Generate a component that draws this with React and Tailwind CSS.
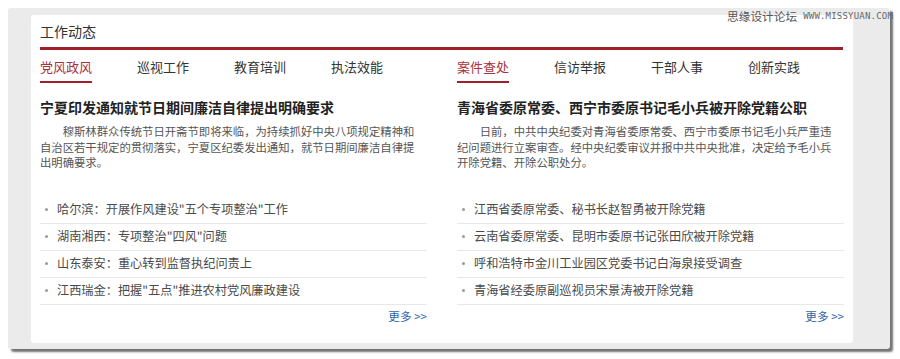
import React from 'react';

const font = { fontFamily: '"Noto Sans CJK SC", "Noto Sans", sans-serif' };

const columns = [
  {
    tabs: ['党风政风', '巡视工作', '教育培训', '执法效能'],
    title: '宁夏印发通知就节日期间廉洁自律提出明确要求',
    summary:
      '穆斯林群众传统节日开斋节即将来临，为持续抓好中央八项规定精神和自治区若干规定的贯彻落实，宁夏区纪委发出通知，就节日期间廉洁自律提出明确要求。',
    items: [
      '哈尔滨：开展作风建设"五个专项整治"工作',
      '湖南湘西：专项整治"四风"问题',
      '山东泰安：重心转到监督执纪问责上',
      '江西瑞金：把握"五点"推进农村党风廉政建设',
    ],
  },
  {
    tabs: ['案件查处', '信访举报', '干部人事', '创新实践'],
    title: '青海省委原常委、西宁市委原书记毛小兵被开除党籍公职',
    summary:
      '日前，中共中央纪委对青海省委原常委、西宁市委原书记毛小兵严重违纪问题进行立案审查。经中央纪委审议并报中共中央批准，决定给予毛小兵开除党籍、开除公职处分。',
    items: [
      '江西省委原常委、秘书长赵智勇被开除党籍',
      '云南省委原常委、昆明市委原书记张田欣被开除党籍',
      '呼和浩特市金川工业园区党委书记白海泉接受调查',
      '青海省经委原副巡视员宋景涛被开除党籍',
    ],
  },
];

const NewsColumn = ({ col }) => {
  return (
    <div className="w-[387px]">
      <div className="flex pt-[3px]">
        {col.tabs.map((tab, i) => (
          <div key={tab} className="w-[97px] shrink-0">
            <div
              className={`inline-block text-[13px] leading-[20px] ${i === 0 ? 'text-[#a8323e]' : 'text-[#333]'}`}
            >
              {tab}
              <div className={`mt-[4px] h-[2px] ${i === 0 ? 'bg-[#a11f2a]' : 'bg-transparent'}`} />
            </div>
          </div>
        ))}
      </div>

      <h3 className="mt-[14px] text-[14px] leading-[20px] font-bold text-[#222]">{col.title}</h3>
      <p className="mt-[7px] w-[380px] text-[11.35px] leading-[15.5px] text-[#555] indent-[2em]">{col.summary}</p>

      <ul className="mt-[26px]">
        {col.items.map(item => (
          <li
            key={item}
            className="flex items-center h-[27px] border-b border-[#e8e8e8] text-[12.2px] text-[#4a4a4a]"
          >
            <span className="w-[3px] h-[3px] rounded-full bg-[#999] ml-[5px] mr-[9px] shrink-0" />
            {item}
          </li>
        ))}
      </ul>

      <div className="flex justify-end mt-[3px]">
        <a className="text-[11.6px] leading-[16px] text-[#2f64a8]">更多 &gt;&gt;</a>
      </div>
    </div>
  );
};

const App = () => {
  return (
    <div className="relative w-[900px] h-[359px] bg-white pt-[8px] pl-[8px]" style={font}>
      <div className="w-[882px] h-[341px] bg-[#ebebeb] rounded-[3px] shadow-[3px_3px_2px_rgba(0,0,0,0.55)] pt-[7px] pl-[23px]">
        <div className="w-[822px] h-[328px] bg-white rounded-[3px] pl-[9px] pt-[6px]">
          <div className="text-[14px] leading-[20px] text-[#333]">工作动态</div>
          <div className="mt-[6px] w-[803px] h-[3px] bg-[#a11f2a]" />
          <div className="flex gap-[30px]">
            {columns.map((col, i) => (
              <NewsColumn key={i} col={col} />
            ))}
          </div>
        </div>
      </div>

      <div className="absolute top-[9px] left-[727px] flex items-center gap-[6px]">
        <span className="text-[11.7px] leading-[14px] text-[#555]">思缘设计论坛</span>
        <span
          className="text-[9px] leading-[14px] text-[#666] tracking-[0.2px]"
          style={{ fontFamily: '"DejaVu Sans Mono", monospace' }}
        >
          WWW.MISSYUAN.COM
        </span>
      </div>
    </div>
  );
};

export default App;
